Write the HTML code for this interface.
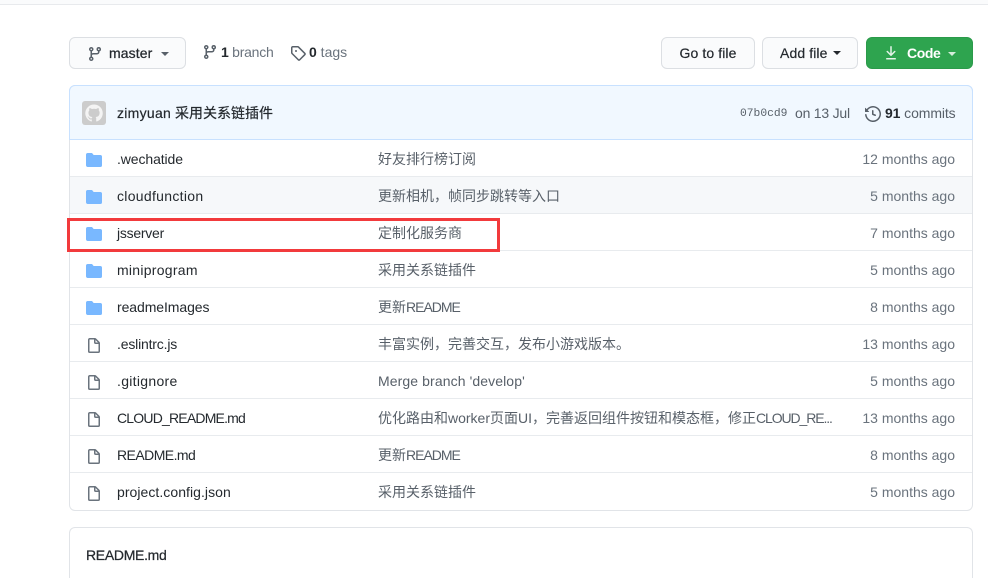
<!DOCTYPE html>
<html style="height:578px;overflow:hidden"><head><meta charset="utf-8">
<style>
*{box-sizing:border-box}
html,body{margin:0;padding:0;background:#fff}
body{width:988px;height:578px;overflow:hidden;position:relative;font:14px/20px "Liberation Sans","Noto Sans CJK SC",sans-serif;color:#24292e}
.a{position:absolute;white-space:nowrap}
.btn{position:absolute;background:#fafbfc;border:1px solid #dcdfe3;border-radius:6px;top:37px;height:32px;line-height:30px;text-align:center}
svg{position:absolute;display:block}
.row{position:absolute;left:70px;width:902px;height:37px;border-top:1px solid #e8ebee}
.n{position:absolute;left:47px;top:9px;white-space:nowrap}
.m{position:absolute;left:308px;top:9px;white-space:nowrap;color:#586069;width:470px;overflow:hidden}
.m i{font-style:normal;letter-spacing:-1px}
.t{position:absolute;right:17px;top:9px;white-space:nowrap;color:#6a737d}
.fo{left:16px;top:12px}
.fi{left:16px;top:13px}
.caret{position:absolute;width:0;height:0;border:4px solid transparent;border-top-color:currentColor;border-bottom:0}
</style></head><body>
<svg width="0" height="0" style="position:absolute"><defs>
<path id="folder" d="M1.75 1A1.75 1.75 0 000 2.75v10.5C0 14.216.784 15 1.75 15h12.5A1.75 1.75 0 0016 13.25v-8.5A1.75 1.75 0 0014.25 3h-6.5a.25.25 0 01-.2-.1l-.9-1.2c-.33-.44-.85-.7-1.4-.7h-4z"/>
<path id="file" fill-rule="evenodd" d="M3.75 1.5a.25.25 0 00-.25.25v11.5c0 .138.112.25.25.25h8.5a.25.25 0 00.25-.25V6H9.75A1.75 1.75 0 018 4.25V1.5H3.75zm5.75.56v2.19c0 .138.112.25.25.25h2.19L9.5 2.06zM2 1.75C2 .784 2.784 0 3.75 0h5.086c.464 0 .909.184 1.237.513l3.414 3.414c.329.328.513.773.513 1.237v8.086A1.75 1.75 0 0112.25 15h-8.5A1.75 1.75 0 012 13.25V1.75z"/>
<path id="branch" fill-rule="evenodd" d="M11.75 2.5a.75.75 0 100 1.5.75.75 0 000-1.5zm-2.25.75a2.25 2.25 0 113 2.122V6A2.5 2.5 0 0110 8.5H6a1 1 0 00-1 1v1.128a2.251 2.251 0 11-1.5 0V5.372a2.25 2.25 0 111.5 0v1.836A2.492 2.492 0 016 7h4a1 1 0 001-1v-.628A2.25 2.25 0 019.5 3.25zM4.25 12a.75.75 0 100 1.5.75.75 0 000-1.5zM3.5 3.25a.75.75 0 111.5 0 .75.75 0 01-1.5 0z"/>
</defs></svg>
<div class="a" style="left:0;top:0;width:988px;height:5px;background:#fafbfc;border-bottom:1px solid #e8eaed"></div>

<div class="btn" style="left:69px;width:117px"></div>
<svg style="left:87px;top:46px" width="16" height="16" viewBox="0 0 16 16" fill="#586069"><use href="#branch"/></svg>
<div class="a" style="left:109px;top:43px;letter-spacing:.1px;-webkit-text-stroke:.25px #24292e">master</div>
<div class="caret" style="left:161px;top:52px;color:#586069"></div>

<svg style="left:202px;top:44px" width="16" height="16" viewBox="0 0 16 16" fill="#586069"><use href="#branch"/></svg>
<div class="a" style="left:221px;top:42px;color:#6a737d;letter-spacing:-.25px"><b style="color:#24292e">1</b> branch</div>
<svg style="left:290px;top:45px" width="16" height="16" viewBox="0 0 16 16" fill="#586069"><path fill-rule="evenodd" d="M2.5 7.775V2.75a.25.25 0 01.25-.25h5.025a.25.25 0 01.177.073l6.25 6.25a.25.25 0 010 .354l-5.025 5.025a.25.25 0 01-.354 0l-6.25-6.25a.25.25 0 01-.073-.177zm-1.5 0V2.75C1 1.784 1.784 1 2.75 1h5.025c.464 0 .91.184 1.238.513l6.25 6.25a1.75 1.75 0 010 2.474l-5.026 5.026a1.75 1.75 0 01-2.474 0l-6.25-6.25A1.75 1.75 0 011 7.775zM6 5a1 1 0 100 2 1 1 0 000-2z"/></svg>
<div class="a" style="left:309px;top:42px;color:#6a737d"><b style="color:#24292e">0</b> tags</div>

<div class="btn" style="left:661px;width:94px;letter-spacing:.1px;-webkit-text-stroke:.2px #24292e">Go to file</div>
<div class="btn" style="left:762px;width:96px;text-align:left;padding-left:17px;letter-spacing:.1px;-webkit-text-stroke:.2px #24292e">Add file</div>
<div class="caret" style="left:833px;top:51px;color:#24292e"></div>
<div class="btn" style="left:866px;width:107px;background:#2ea44f;border-color:#2b9a4a"></div>
<svg style="left:883px;top:45px" width="16" height="16" viewBox="0 0 16 16" fill="#e4f3e8"><path fill-rule="evenodd" d="M7.47 10.78a.75.75 0 001.06 0l3.75-3.75a.75.75 0 00-1.06-1.06L8.75 8.44V1.75a.75.75 0 00-1.5 0v6.69L4.78 5.97a.75.75 0 00-1.06 1.06l3.75 3.75zM3.75 13a.75.75 0 000 1.5h8.5a.75.75 0 000-1.5h-8.5z"/></svg>
<div class="a" style="left:907px;top:43px;color:#fff;font-weight:700;letter-spacing:-.4px">Code</div>
<div class="caret" style="left:948px;top:52px;color:#d5eddc"></div>

<div class="a" style="left:69px;top:85px;width:904px;height:426px;border:1px solid #e1e4e8;border-radius:6px;overflow:hidden"></div>
<div class="a" style="left:69px;top:85px;width:904px;height:55px;background:#f1f8ff;border:1px solid #c8e1ff;border-radius:6px 6px 0 0"></div>
<svg style="left:82px;top:101px" width="24" height="24" viewBox="0 0 24 24"><rect width="24" height="24" rx="3" fill="#cccccc"/><path fill="#f4f4f4" d="M12 3.5a8.7 8.7 0 00-2.75 16.95c.43.08.6-.19.6-.42v-1.6c-2.42.53-2.93-1.03-2.93-1.03-.4-1-.97-1.27-.97-1.27-.79-.54.06-.53.06-.53.87.06 1.33.9 1.33.9.78 1.33 2.04.95 2.54.72.08-.56.3-.95.55-1.17-1.93-.22-3.96-.97-3.96-4.3 0-.95.34-1.73.9-2.34-.09-.22-.39-1.1.08-2.3 0 0 .73-.23 2.4.9a8.3 8.3 0 014.36 0c1.66-1.13 2.4-.9 2.4-.9.47 1.2.17 2.08.08 2.3.56.61.9 1.39.9 2.34 0 3.34-2.04 4.07-3.98 4.29.31.27.59.8.59 1.61v2.38c0 .23.16.5.6.42A8.7 8.7 0 0012 3.5z"/></svg>
<div class="a" style="left:117px;top:103px;-webkit-text-stroke:.2px #24292e"><span style="letter-spacing:.28px">zimyuan</span> 采用关系链插件</div>
<div class="a" style="left:740px;top:104px;font:11.3px/20px 'Liberation Mono',monospace;color:#586069">07b0cd9</div>
<div class="a" style="left:795px;top:103px;color:#586069;letter-spacing:-.22px">on 13 Jul</div>
<svg style="left:865px;top:106px" width="16" height="16" viewBox="0 0 16 16" fill="#586069"><path fill-rule="evenodd" d="M1.643 3.143L.427 1.927A.25.25 0 000 2.104V5.75c0 .138.112.25.25.25h3.646a.25.25 0 00.177-.427L2.715 4.215a6.5 6.5 0 11-1.18 4.458.75.75 0 10-1.493.154 8.001 8.001 0 101.6-5.684zM7.75 4a.75.75 0 01.75.75v2.992l2.028.812a.75.75 0 01-.557 1.392l-2.5-1A.75.75 0 017 8.25v-3.5A.75.75 0 017.75 4z"/></svg>
<div class="a" style="left:885px;top:103px;color:#586069;letter-spacing:-.1px"><b style="color:#24292e">91</b> commits</div>

<!-- rows -->
<div class="row" style="top:140px;border-top:0"><svg class="fo" width="16" height="16" viewBox="0 0 16 16" fill="#79b8ff"><use href="#folder"/></svg><div class="n" style="letter-spacing:-.1px">.wechatide</div><div class="m">好友排行榜订阅</div><div class="t">12 months ago</div></div>

<div class="row" style="top:176px;background:#f6f8fa"><svg class="fo" width="16" height="16" viewBox="0 0 16 16" fill="#79b8ff"><use href="#folder"/></svg><div class="n" style="letter-spacing:.3px">cloudfunction</div><div class="m">更新相机，帧同步跳转等入口</div><div class="t">5 months ago</div></div>

<div class="row" style="top:213px"><svg class="fo" width="16" height="16" viewBox="0 0 16 16" fill="#79b8ff"><use href="#folder"/></svg><div class="n" style="letter-spacing:-.25px">jsserver</div><div class="m">定制化服务商</div><div class="t">7 months ago</div></div>

<div class="row" style="top:250px"><svg class="fo" width="16" height="16" viewBox="0 0 16 16" fill="#79b8ff"><use href="#folder"/></svg><div class="n" style="letter-spacing:.27px">miniprogram</div><div class="m">采用关系链插件</div><div class="t">5 months ago</div></div>

<div class="row" style="top:287px"><svg class="fo" width="16" height="16" viewBox="0 0 16 16" fill="#79b8ff"><use href="#folder"/></svg><div class="n" style="letter-spacing:-.08px">readmeImages</div><div class="m">更新<i>README</i></div><div class="t">8 months ago</div></div>

<div class="row" style="top:324px"><svg class="fi" width="16" height="16" viewBox="0 0 16 16" fill="#6a737d"><use href="#file"/></svg><div class="n" style="letter-spacing:-.18px">.eslintrc.js</div><div class="m">丰富实例，完善交互，发布小游戏版本。</div><div class="t">13 months ago</div></div>

<div class="row" style="top:361px"><svg class="fi" width="16" height="16" viewBox="0 0 16 16" fill="#6a737d"><use href="#file"/></svg><div class="n" style="letter-spacing:.3px">.gitignore</div><div class="m" style="letter-spacing:.1px">Merge branch 'develop'</div><div class="t">5 months ago</div></div>

<div class="row" style="top:398px"><svg class="fi" width="16" height="16" viewBox="0 0 16 16" fill="#6a737d"><use href="#file"/></svg><div class="n" style="letter-spacing:-.8px">CLOUD_README.md</div><div class="m">优化路由和worker页面UI，完善返回组件按钮和模态框，修正<span style="letter-spacing:-1.1px">CLOUD_RE...</span></div><div class="t">13 months ago</div></div>

<div class="row" style="top:435px"><svg class="fi" width="16" height="16" viewBox="0 0 16 16" fill="#6a737d"><use href="#file"/></svg><div class="n" style="letter-spacing:-.55px">README.md</div><div class="m">更新<i>README</i></div><div class="t">8 months ago</div></div>

<div class="row" style="top:472px;height:38px"><svg class="fi" width="16" height="16" viewBox="0 0 16 16" fill="#6a737d"><use href="#file"/></svg><div class="n" style="letter-spacing:.05px">project.config.json</div><div class="m">采用关系链插件</div><div class="t">5 months ago</div></div>

<!-- highlight -->
<div class="a" style="left:67px;top:218px;width:433px;height:34px;border:3px solid #f23a3c"></div>

<!-- readme box -->
<div class="a" style="left:69px;top:527px;width:904px;height:51px;border:1px solid #e1e4e8;border-bottom:0;border-radius:6px 6px 0 0"></div>
<div class="a" style="left:86px;top:545px;letter-spacing:-.3px;-webkit-text-stroke:.25px #24292e">README.md</div>
</body></html>
